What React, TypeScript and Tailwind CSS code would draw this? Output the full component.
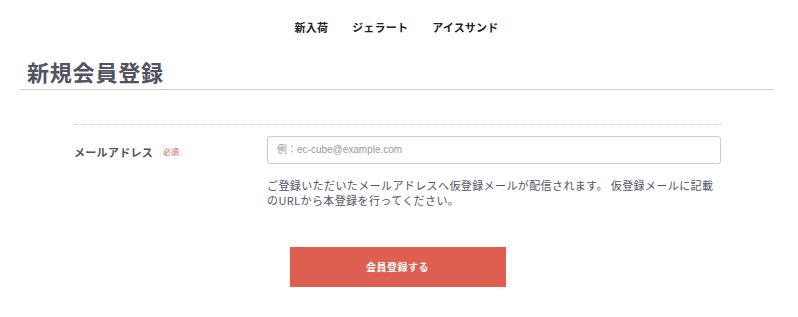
import React from "react";

const navItems = ["新入荷", "ジェラート", "アイスサンド"];

export default function App() {
  return (
    <div className="w-full min-h-[317px] bg-white text-[#525263] font-['Noto_Sans_CJK_JP','Noto_Sans',sans-serif]">
      <header className="h-[56px] pt-[20px]">
        <nav className="flex justify-center gap-6 pr-[5px] text-[11px] leading-[14px] font-bold text-[#222]">
          {navItems.map((item) => (
            <a key={item} href="#" className="tracking-[0.2px]">
              {item}
            </a>
          ))}
        </nav>
      </header>

      <div className="ml-5 mr-6 border-b border-[#ccc] pb-[3px] pl-[7px]">
        <h1 className="text-[22px] leading-[30px] font-bold tracking-[0.8px]">新規会員登録</h1>
      </div>

      <form className="ml-[74px] w-[647px] mt-[34px]" onSubmit={(e) => e.preventDefault()}>
        <div className="grid grid-cols-[193px_1fr] items-start border-t border-dotted border-[#ccc] pt-[9px]">
          <div className="pt-[11px] flex items-center gap-[10px]">
            <span className="text-[11px] leading-[14px] font-bold tracking-[0.3px]">メールアドレス</span>
            <span className="text-[8px] leading-[14px] text-[#de5d50]">必須</span>
          </div>
          <div>
            <input
              type="email"
              placeholder="例：ec-cube@example.com"
              className="w-full h-[28px] border border-[#ccc] rounded-[3px] px-[9px] text-[10px] font-['Liberation_Sans','Noto_Sans_CJK_JP',sans-serif] placeholder:text-[#999] outline-none"
            />
            <p className="mt-[14px] text-[11px] leading-[15px] tracking-[0.4px]">
              ご登録いただいたメールアドレスへ仮登録メールが配信されます。 仮登録メールに記載のURLから本登録を行ってください。
            </p>
          </div>
        </div>
        <div className="flex justify-center mt-[39px]">
          <button
            type="submit"
            className="w-[216px] h-[40px] bg-[#de5f50] text-white text-[10px] font-bold tracking-[0.5px]"
          >
            会員登録する
          </button>
        </div>
      </form>
    </div>
  );
}
